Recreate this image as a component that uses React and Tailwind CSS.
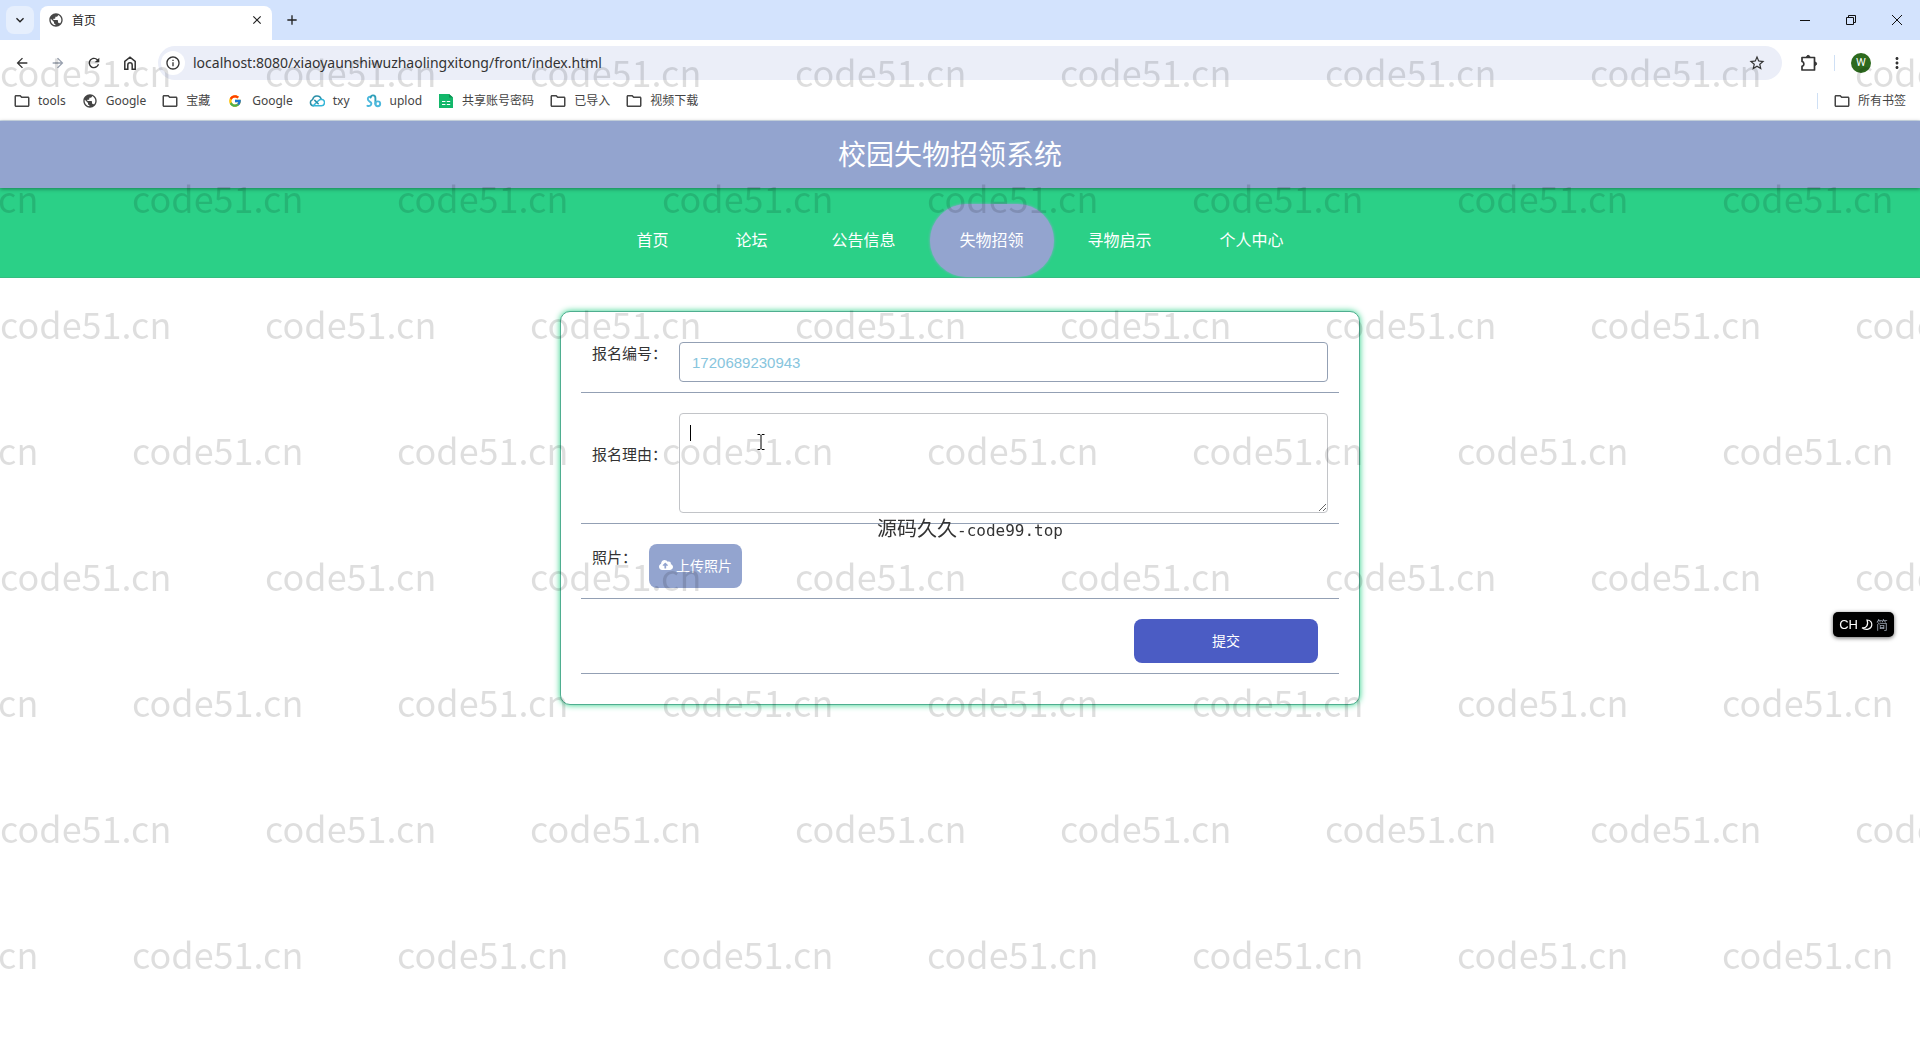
import {
    MdAdd,
    MdArrowBack,
    MdArrowForward,
    MdClose,
    MdInfoOutline,
    MdKeyboardArrowDown,
    MdMoreVert,
    MdOutlineFolder,
    MdPublic,
    MdRefresh,
    MdStarBorder,
} from 'react-icons/md';
import { FcGoogle } from 'react-icons/fc';
import { FaCloudUploadAlt } from 'react-icons/fa';

const HomeIcon = () => (
    <svg viewBox="0 0 16 16" className="w-4 h-4" fill="none" stroke="currentColor" strokeWidth="1.5">
        <path d="M2.8 6.4 8 2.2l5.2 4.2v7.8h-3V10a2.2 2.2 0 0 0-4.4 0v4.2h-3z" />
    </svg>
);

const PuzzleIcon = () => (
    <svg viewBox="0 0 18 18" className="w-[18px] h-[18px]" fill="none" stroke="currentColor" strokeWidth="1.7" strokeLinejoin="round">
        <path d="M2 3.5h12.5V16H2v-3.6a2.6 2.6 0 0 0 0-5z" />
        <path d="M6.5 2.6a1.8 1.8 0 0 1 3.4 0zM15.4 8a1.8 1.8 0 0 1 0 3.4z" fill="currentColor" strokeWidth="1" />
    </svg>
);

const CloudIcon = () => (
    <svg viewBox="0 0 16 16" className="w-4 h-4" fill="none" strokeWidth="1.5" strokeLinecap="round" strokeLinejoin="round">
        <path d="M4.2 12.8A3.2 3.2 0 0 1 3.6 6.6 4.5 4.5 0 0 1 12.2 6" stroke="#2b8fa8" />
        <path d="M4.2 12.8h7.8a3.3 3.3 0 0 0 .4-6.6c-1.6 0-2.4.8-3.6 2z" stroke="#35b6d8" />
        <path d="m5.8 7.4 3.4 3.4" stroke="#2b8fa8" />
    </svg>
);

const UplodIcon = () => (
    <svg viewBox="0 0 16 16" className="w-4 h-4" fill="none" strokeWidth="1.9" strokeLinecap="round">
        <path d="M1.4 12.8c2 .6 4-.2 4-2.2 0-2-3.6-2-3.6-4.6 0-1.8 1.6-2.6 2.8-2.2" stroke="#4bb8dd" />
        <path d="M4.6 4.6C5.2 1.4 9.4 1.8 9.4 5v6" stroke="#2f9fb9" />
        <circle cx="11.8" cy="10.8" r="2.4" stroke="#4bb8dd" />
    </svg>
);

const SheetIcon = () => (
    <svg viewBox="0 0 16 16" className="w-4 h-4">
        <path d="M1 1h10l4 3.5V15H1z" fill="#12b76a" />
        <path d="M11 1v3.5h4z" fill="#0c8f50" />
        <path d="M4 8.5h3.4M8.8 8.5h3.4M4 11.5h3.4M8.8 11.5h3.4" stroke="#fff" strokeWidth="1" />
    </svg>
);

const folderIcon = <MdOutlineFolder className="w-[18px] h-[18px] -mx-px" />;

const bookmarks = [
    { name: 'tools', icon: folderIcon },
    { name: 'Google', icon: <MdPublic className="w-4 h-4" /> },
    { name: '宝藏', icon: folderIcon },
    { name: 'Google', icon: <FcGoogle className="mx-0.5 w-[14px] h-[14px]" /> },
    { name: 'txy', icon: <CloudIcon /> },
    { name: 'uplod', icon: <UplodIcon /> },
    { name: '共享账号密码', icon: <SheetIcon /> },
    { name: '已导入', icon: folderIcon },
    { name: '视频下载', icon: folderIcon },
];

const menus = ['首页', '论坛', '公告信息', '失物招领', '寻物启示', '个人中心'];

const TabStrip = () => (
    <div className="flex h-10 items-end bg-[#d3e3fd]">
        <button aria-label="搜索标签页" className="ml-1.5 mb-1.5 flex h-7 w-7 items-center justify-center rounded-lg bg-[#e6effd]">
            <MdKeyboardArrowDown className="h-4 w-4" />
        </button>
        <div className="ml-1.5 flex h-[34px] w-[232px] items-center rounded-t-lg bg-white px-2 pb-1.5">
            <MdPublic className="h-4 w-4 text-[#474747]" />
            <span className="ml-2 flex-1 text-xs">首页</span>
            <button aria-label="关闭标签页"><MdClose className="h-3.5 w-3.5" /></button>
        </div>
        <button aria-label="新标签页" className="mb-3 ml-3"><MdAdd className="h-4 w-4" /></button>
        <div className="mb-3 ml-auto flex h-4 items-center gap-9 pr-[18px]">
            <button aria-label="最小化">
                <svg viewBox="0 0 10 10" className="h-2.5 w-2.5" stroke="#111"><path d="M0 5.5h10" /></svg>
            </button>
            <button aria-label="还原">
                <svg viewBox="0 0 10 10" className="h-2.5 w-2.5" fill="none" stroke="#111">
                    <path d="M.5 2.5h7v7h-7zM2.5 2.5v-2h7v7h-2" />
                </svg>
            </button>
            <button aria-label="关闭">
                <svg viewBox="0 0 10 10" className="h-2.5 w-2.5" stroke="#111"><path d="m0 0 10 10M10 0 0 10" /></svg>
            </button>
        </div>
    </div>
);

const Toolbar = () => (
    <div className="flex h-10 items-center bg-white pt-1.5 text-[#333]">
        <div className="flex items-center gap-5 pl-3.5">
            <button aria-label="后退"><MdArrowBack className="h-4 w-4" /></button>
            <button aria-label="前进" className="text-gray-400"><MdArrowForward className="h-4 w-4" /></button>
            <button aria-label="重新加载"><MdRefresh className="h-4 w-4" /></button>
            <button aria-label="主页"><HomeIcon /></button>
        </div>
        <div className="ml-5 flex h-[34px] flex-1 items-center rounded-full bg-[#ebeef8] pl-[3px] pr-4">
            <div className="flex h-6 w-6 items-center justify-center rounded-full bg-white">
                <MdInfoOutline className="h-4 w-4" />
            </div>
            <input
                aria-label="地址"
                readOnly
                value="localhost:8080/xiaoyaunshiwuzhaolingxitong/front/index.html"
                className="ml-2 flex-1 bg-transparent font-['Noto_Sans',sans-serif] text-sm text-[#333] outline-none"
            />
            <button aria-label="收藏"><MdStarBorder className="h-[18px] w-[18px]" /></button>
        </div>
        <div className="flex items-center pl-[18px] pr-3.5">
            <button aria-label="扩展程序"><PuzzleIcon /></button>
            <span className="ml-4 h-4 w-px bg-[#cfe0f5]" />
            <button aria-label="用户" className="ml-4 h-5 w-5 rounded-full bg-[#2d6a1e] text-center font-['Roboto',sans-serif] text-[11px] leading-5 text-white">
                W
            </button>
            <button aria-label="更多" className="ml-[17px]"><MdMoreVert className="h-[18px] w-[18px]" /></button>
        </div>
    </div>
);

const BookmarkBar = () => (
    <div className="flex h-[41px] items-center border-b border-[#d5e3ef] bg-white px-3.5 pt-0.5 font-['Noto_Sans','Noto_Sans_CJK_SC',sans-serif] text-xs text-[#444]">
        <div className="flex items-center gap-4">
            {bookmarks.map((item, index) => (
                <a key={index} href="#" className="flex items-center gap-2">
                    {item.icon}
                    <span>{item.name}</span>
                </a>
            ))}
        </div>
        <div className="ml-auto flex items-center">
            <span className="mr-4 h-4 w-px bg-[#cfe0f5]" />
            <a href="#" className="flex items-center gap-2">
                {folderIcon}
                <span>所有书签</span>
            </a>
        </div>
    </div>
);

const Nav = () => (
    <nav className="flex justify-center gap-1 border-b border-[#35bd80] bg-[#2bd087] pt-4">
        {menus.map((menu) => (
            <a
                key={menu}
                href="#"
                className={`flex h-[73px] items-center rounded-full px-[30px] pb-1 text-base text-white first:mr-[3px] last:ml-1 ${
                    menu === '失物招领' ? 'bg-[#93a4cf] shadow-[0_0_3px_#93a4cf]' : ''
                }`}
            >
                {menu}
            </a>
        ))}
    </nav>
);

const rowClass = 'mb-2.5 flex items-center gap-3 border-b border-[#93a0b4] px-[11px] pb-2.5';
const labelClass = 'shrink-0 pb-[18px] text-[15px] leading-5 text-[#333]';

const SignupForm = () => (
    <form className="mx-auto mt-[33px] w-full max-w-[800px] rounded-[10px] border border-[#4fae90] bg-white p-5 shadow-[0_0_6px_#2bd087]">
        <div className={rowClass + ' pt-2.5'}>
            <label htmlFor="number" className={labelClass}>报名编号：</label>
            <input
                id="number"
                readOnly
                value="1720689230943"
                className="h-10 min-w-0 flex-1 rounded border border-[#93a0b4] px-3 font-['Liberation_Sans',sans-serif] text-[15px] text-[#87c5dd] outline-none"
            />
        </div>
        <div className={rowClass + ' pt-2.5'}>
            <label htmlFor="reason" className={labelClass}>报名理由：</label>
            <div className="relative flex min-w-0 flex-1">
                <textarea id="reason" className="h-[100px] w-full resize rounded border border-[#c2c4c8] p-2.5 outline-none" />
                {/* caret and mouse pointer */}
                <span className="absolute left-[11px] top-3 h-4 w-px bg-black" />
                <svg viewBox="0 0 8 16" className="absolute left-[78px] top-[21px] h-4 w-2" fill="none" stroke="#000">
                    <path d="M.5.5H3l1 1 1-1h2.5M4 1.5v13M.5 15.5H3l1-1 1 1h2.5" />
                </svg>
            </div>
        </div>
        <div className={rowClass + ' pt-2.5'}>
            <label htmlFor="upload" className={labelClass}>照片：</label>
            <button id="upload" type="button" className="flex h-11 items-center gap-[3px] rounded-lg bg-[#93a4cf] px-2.5 pb-0.5 text-sm text-white">
                <FaCloudUploadAlt className="h-[14px] w-[14px]" />
                上传照片
            </button>
        </div>
        <div className={rowClass + ' justify-end pt-2.5'}>
            <button type="button" className="mr-2.5 h-11 w-[184px] rounded-lg bg-[#4b5cc4] pb-0.5 text-sm text-white">提交</button>
        </div>
    </form>
);

const Watermark = () => (
    <div aria-hidden="true" className="pointer-events-none fixed inset-0 overflow-hidden font-['Noto_Sans_CJK_SC',sans-serif] text-[36px] leading-[52px] text-black/13">
        {[...Array(8)].map((_, row) => (
            <div key={row} className={`flex h-[126px] pt-[45px] ${row % 2 ? '-ml-[133px]' : ''}`}>
                {[...Array(9)].map((_, col) => (
                    <span key={col} className="w-[265px] shrink-0">code51.cn</span>
                ))}
            </div>
        ))}
    </div>
);

export default function App() {
    return (
        <div className="min-h-screen bg-white font-['Noto_Sans_CJK_SC',sans-serif] text-[#222]">
            <TabStrip />
            <Toolbar />
            <BookmarkBar />
            <header className="relative flex h-[67px] items-center justify-center bg-[#93a4cf] pr-5 pb-1 shadow-[0_1px_4px_rgba(0,0,0,0.4)]">
                <h1 className="text-[28px] text-white">校园失物招领系统</h1>
            </header>
            <Nav />
            <SignupForm />

            <Watermark />
            <div className="pointer-events-none fixed inset-x-0 top-[513px] pl-5 text-center font-['DejaVu_Sans_Mono','Noto_Sans_CJK_SC',monospace] text-base leading-[30px] text-[#333]">
                <span className="font-['Noto_Sans_CJK_SC',sans-serif] text-xl leading-[30px]">源码久久</span>-code99.top
            </div>
            <div className="fixed right-[26px] top-[612px] flex h-[25px] items-center gap-[3px] rounded-[5px] bg-black px-1.5 text-xs text-gray-400 shadow-[0_1px_4px_rgba(0,0,0,0.6)]">
                <span className="font-['Liberation_Sans',sans-serif] text-[13px] text-white">CH</span>
                <svg viewBox="0 0 12 12" className="h-3 w-3" fill="none" stroke="#fff" strokeWidth="1.2">
                    <path d="M6 1c3.6 0 5 2.4 4.8 5C10.5 10 5 12 1 8.8 5 9.5 8 6 6 1z" />
                </svg>
                简
            </div>
        </div>
    );
}
